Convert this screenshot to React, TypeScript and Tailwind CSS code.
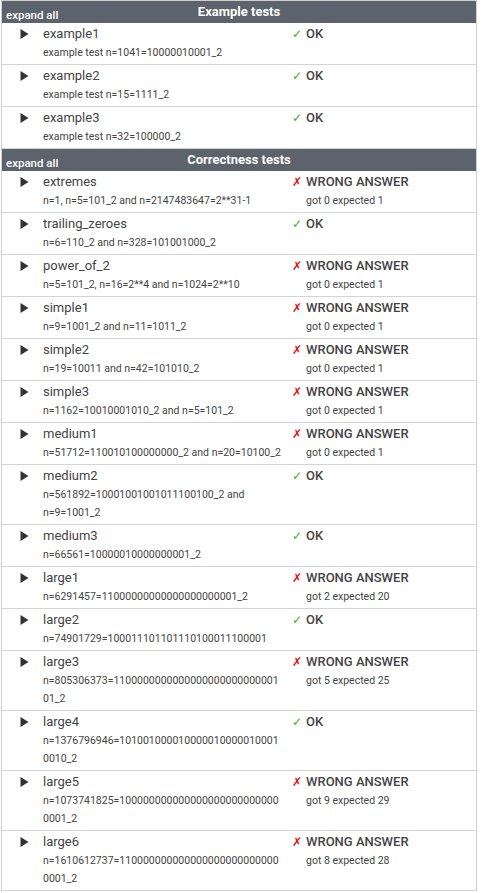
type TestResult = {
  name: string;
  desc: string;
  ok: boolean;
  detail?: string;
};

const zeros = (n: number) => '0'.repeat(n);

const exampleTests: TestResult[] = [
  { name: 'example1', desc: 'example test n=1041=10000010001_2', ok: true },
  { name: 'example2', desc: 'example test n=15=1111_2', ok: true },
  { name: 'example3', desc: 'example test n=32=100000_2', ok: true },
];

const correctnessTests: TestResult[] = [
  { name: 'extremes', desc: 'n=1, n=5=101_2 and n=2147483647=2**31-1', ok: false, detail: 'got 0 expected 1' },
  { name: 'trailing_zeroes', desc: 'n=6=110_2 and n=328=101001000_2', ok: true },
  { name: 'power_of_2', desc: 'n=5=101_2, n=16=2**4 and n=1024=2**10', ok: false, detail: 'got 0 expected 1' },
  { name: 'simple1', desc: 'n=9=1001_2 and n=11=1011_2', ok: false, detail: 'got 0 expected 1' },
  { name: 'simple2', desc: 'n=19=10011 and n=42=101010_2', ok: false, detail: 'got 0 expected 1' },
  { name: 'simple3', desc: 'n=1162=10010001010_2 and n=5=101_2', ok: false, detail: 'got 0 expected 1' },
  { name: 'medium1', desc: 'n=51712=110010100000000_2 and n=20=10100_2', ok: false, detail: 'got 0 expected 1' },
  { name: 'medium2', desc: 'n=561892=10001001001011100100_2 and n=9=1001_2', ok: true },
  { name: 'medium3', desc: 'n=66561=10000010000000001_2', ok: true },
  { name: 'large1', desc: `n=6291457=11${zeros(20)}1_2`, ok: false, detail: 'got 2 expected 20' },
  { name: 'large2', desc: 'n=74901729=100011101101110100011100001', ok: true },
  { name: 'large3', desc: `n=805306373=11${zeros(25)}101_2`, ok: false, detail: 'got 5 expected 25' },
  { name: 'large4', desc: 'n=1376796946=1010010000100000100000100010010_2', ok: true },
  { name: 'large5', desc: `n=1073741825=1${zeros(29)}1_2`, ok: false, detail: 'got 9 expected 29' },
  { name: 'large6', desc: `n=1610612737=11${zeros(28)}1_2`, ok: false, detail: 'got 8 expected 28' },
];

function Arrow() {
  return (
    <svg width="9" height="10" viewBox="0 0 9 10" className="mt-[5px]">
      <polygon points="0.5,0 8.5,5 0.5,10" fill="#333" />
    </svg>
  );
}

function SectionHeader({ title }: { title: string }) {
  return (
    <div className="grid h-[22px] grid-cols-[1fr_auto_1fr] bg-[#5c636d] text-white">
      <span className="self-end pl-[4px] text-[11.5px] font-medium leading-[16px]">expand all</span>
      <span className="text-[13px] font-bold leading-[22px]">{title}</span>
      <span />
    </div>
  );
}

function TestRow({ test }: { test: TestResult }) {
  return (
    <div className="flex border-b border-[#d4d4d4] pt-px pb-[2px] text-[#444]">
      <div className="w-[41px] shrink-0 pl-[18px]">
        <Arrow />
      </div>
      <div className="w-[240px] shrink-0">
        <div className="text-[13px] leading-[20px]">{test.name}</div>
        <div className="text-[10.5px] leading-[18px] [overflow-wrap:anywhere]">{test.desc}</div>
      </div>
      <div className="flex pl-[9px]">
        <span
          className={
            test.ok
              ? 'w-[14px] text-[12px] leading-[20px] text-[#3fae2a]'
              : 'w-[14px] text-[12px] leading-[20px] text-[#e0101a]'
          }
        >
          {test.ok ? '✓' : '✗'}
        </span>
        <div>
          <div className="text-[13px] font-medium leading-[20px]">{test.ok ? 'OK' : 'WRONG ANSWER'}</div>
          {test.detail && <div className="text-[10.5px] leading-[18px]">{test.detail}</div>}
        </div>
      </div>
    </div>
  );
}

export default function App() {
  return (
    <div className="min-h-screen bg-white font-['Roboto',sans-serif]">
      <div className="ml-px w-[476px] border-x border-t border-[#cfcfcf]">
        <SectionHeader title="Example tests" />
        {exampleTests.map((t) => (
          <TestRow key={t.name} test={t} />
        ))}
        <SectionHeader title="Correctness tests" />
        {correctnessTests.map((t) => (
          <TestRow key={t.name} test={t} />
        ))}
      </div>
    </div>
  );
}
